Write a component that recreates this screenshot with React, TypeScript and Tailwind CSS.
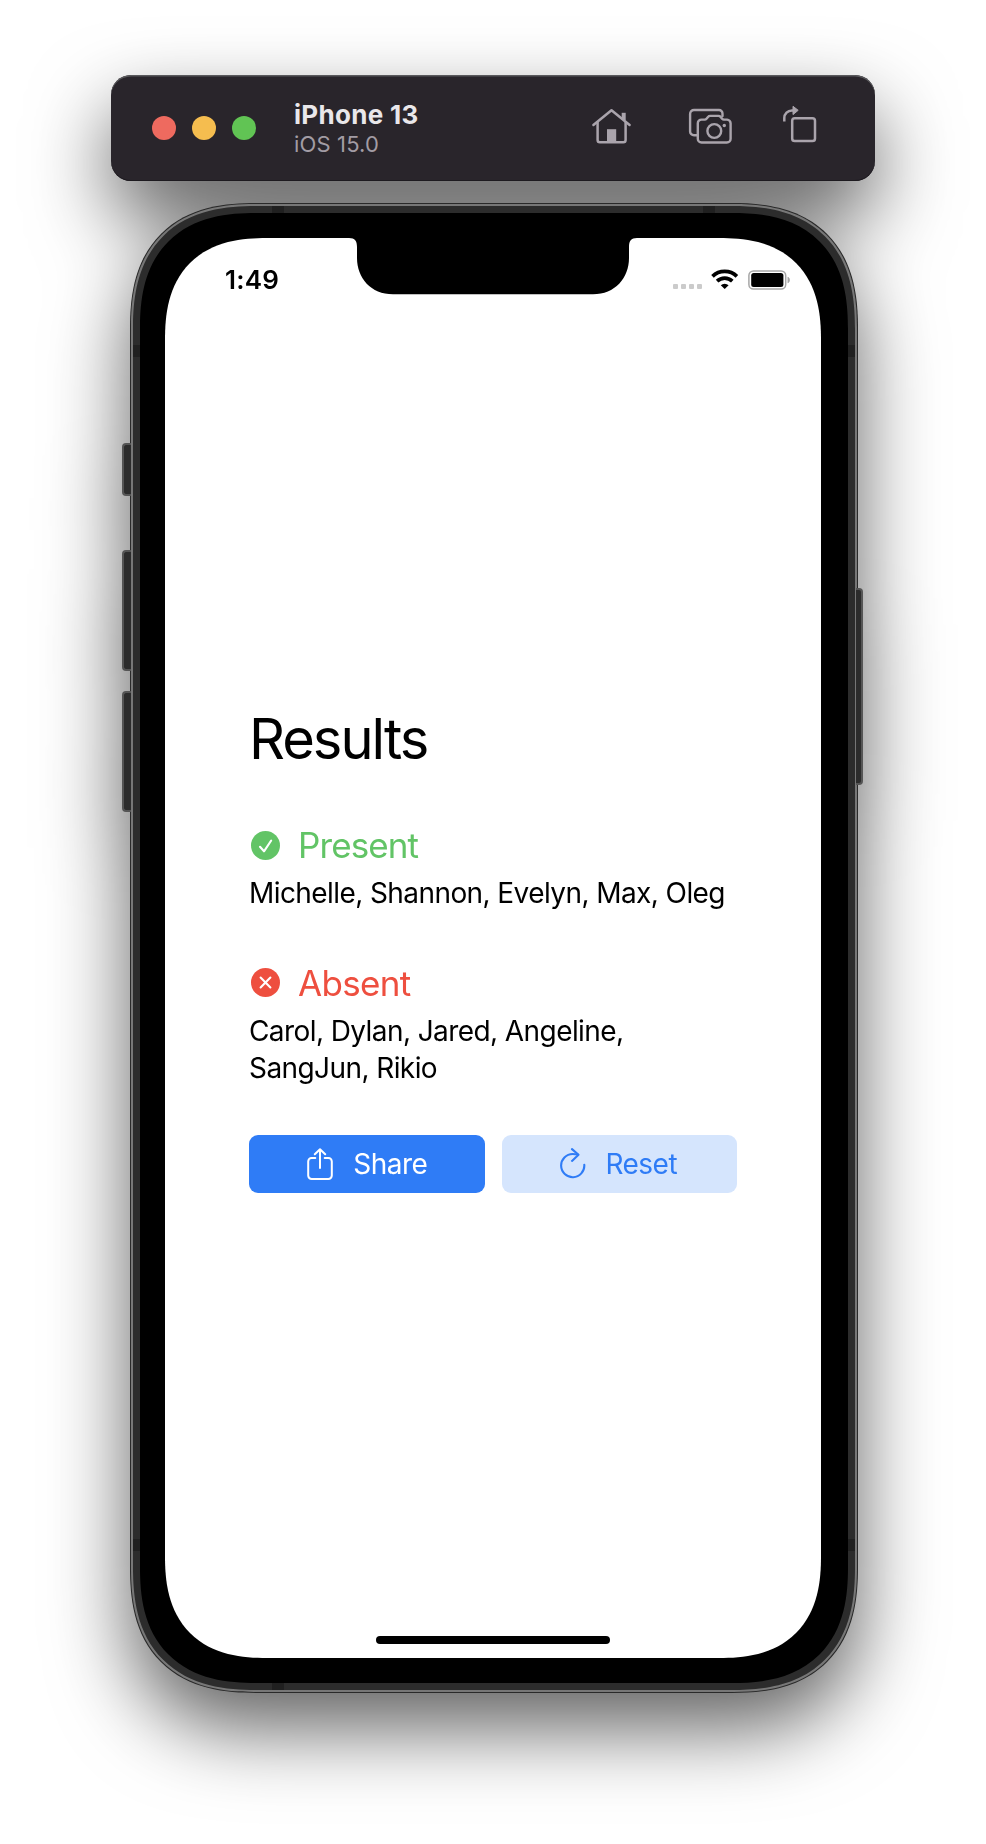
import type { ReactNode } from "react";

const NAMES = "mt-[7px] text-[28px] leading-[37px] tracking-[-0.580px] whitespace-nowrap text-black";

function HomeIcon() {
  return (
    <svg width="42" height="38" viewBox="0 0 42 38" fill="none" stroke="#aaa4ac" strokeWidth="2.5" strokeLinecap="round" strokeLinejoin="round">
      <path d="M2.4 18 20.5 3.2 38.6 18" />
      <path d="M6.6 15.5V33a2.3 2.3 0 0 0 2.3 2.3h23.4a2.3 2.3 0 0 0 2.3-2.3V15.5" />
      <path d="M32.7 13V5.800" strokeWidth="4" strokeLinecap="butt" />
      <path d="M16 35.5V22.2h9.2v13.3z" fill="#aaa4ac" stroke="none" />
    </svg>
  );
}

function CameraIcon() {
  return (
    <svg width="44" height="38" viewBox="0 0 44 38" fill="none" stroke="#aaa4ac" strokeWidth="2.4" strokeLinecap="round" strokeLinejoin="round">
      <path d="M9 27.3H6a3.9 3.9 0 0 1-3.9-3.9V5.9A3.9 3.9 0 0 1 6 2h25a3.5 3.5 0 0 1 3.5 3.6V8" />
      <path d="M13.5 11.6h3.2c.8 0 1.3-.3 1.8-.9l1.5-1.8c.6-.7 1.2-1 2.2-1h8.2c1 0 1.6.3 2.2 1l1.5 1.8c.5.6 1 .9 1.8.9h3.2a3.7 3.7 0 0 1 3.5 3.7v15.5a3.7 3.7 0 0 1-3.7 3.7H13.5a3.7 3.7 0 0 1-3.7-3.7v-15.5a3.7 3.7 0 0 1 3.7-3.7z" />
      <circle cx="26.3" cy="23" r="6.9" />
      <circle cx="36.3" cy="17.5" r="1.7" fill="#aaa4ac" stroke="none" />
    </svg>
  );
}

function RotateIcon() {
  return (
    <svg width="36" height="40" viewBox="0 0 36 40" fill="none" stroke="#aaa4ac" strokeWidth="2.5">
      <rect x="10.2" y="14.2" width="22.8" height="22.8" rx="2.6" />
      <path d="M2.3 17.5V14a7.6 7.6 0 0 1 7.6-7.6h2" />
      <path d="M11 2.3 16.2 6.3 11 10.6z" fill="#aaa4ac" strokeWidth="1" strokeLinejoin="round" />
    </svg>
  );
}

function WifiIcon() {
  return (
    <svg width="28" height="20" viewBox="0 0 28 20" fill="none" stroke="#000" strokeWidth="3.7">
      <path d="M1.5 7.4a17.5 17.5 0 0 1 24.4 0" />
      <path d="M6.1 12.2a11 11 0 0 1 15.2 0" />
      <path d="M13.7 20 9.8 16.3a5.4 5.4 0 0 1 7.8 0z" fill="#000" stroke="none" />
    </svg>
  );
}

function BatteryIcon() {
  return (
    <svg width="43" height="20" viewBox="0 0 43 20" fill="none">
      <rect x="0.9" y="0.9" width="36.8" height="18.2" rx="4.6" stroke="#a6a6a6" strokeWidth="1.5" />
      <rect x="3.2" y="3.1" width="32.2" height="13.8" rx="2.5" fill="#000" />
      <path d="M39.9 7v6a3.5 3.5 0 0 0 0-6z" fill="#a6a6a6" stroke="#a6a6a6" strokeWidth=".6" />
    </svg>
  );
}

function ShareIcon() {
  return (
    <svg width="26" height="32" viewBox="0 0 26 32" fill="none" stroke="#fff" strokeWidth="2" strokeLinecap="round" strokeLinejoin="round">
      <path d="M8.3 10H4.6A3.4 3.4 0 0 0 1.2 13.4v14.2A3.4 3.4 0 0 0 4.6 31h16.8a3.4 3.4 0 0 0 3.4-3.4V13.4A3.4 3.4 0 0 0 21.4 10h-3.7" />
      <path d="M13 20V1.5M7.8 6.3 13 1.2l5.2 5.1" />
    </svg>
  );
}

function ResetIcon() {
  return (
    <svg width="26" height="32" viewBox="0 0 26 32" fill="none" stroke="#2f7cf6" strokeWidth="2.1" strokeLinecap="round" strokeLinejoin="round">
      <path d="M24.3 16.9A11.6 11.6 0 1 1 12.7 6c1.7 0 3.4.2 5 .5" />
      <path d="M12 1.1 18.5 6.7 12 12.9" />
    </svg>
  );
}

function StatusHeading({ color, label, children }: { color: string; label: ReactNode; children: ReactNode }) {
  return (
    <div className={`flex items-center gap-[18.5px] pl-[1.5px] h-[46px] ${color}`}>
      <svg width="29" height="29" viewBox="0 0 29 29">
        <circle cx="14.5" cy="14.5" r="14.5" fill="currentColor" />
        <g fill="none" stroke="#fff" strokeWidth="2.1" strokeLinecap="round" strokeLinejoin="round">{children}</g>
      </svg>
      {label}
    </div>
  );
}

const SIDE_BUTTON = "absolute bg-[#2c2c2c] border-[#555]";
const BAND = "absolute bg-[#202020]";

export default function App() {
  return (
    <div className="w-[986px] h-[1844px] bg-white overflow-hidden font-['Inter',sans-serif]">
      <div className="flex flex-col pt-[75px] [filter:drop-shadow(0_36px_40px_rgba(0,0,0,0.61))]">
        <header className="ml-[111px] w-[764px] h-[106px] rounded-[20px] bg-[#29252b] shadow-[inset_0_1.5px_0_#59595c,inset_0_-1px_0_#1d1a1f] flex items-center pl-[41px]">
          <div className="flex gap-4">
            <span className="size-6 rounded-full bg-[#ee6a5f]" />
            <span className="size-6 rounded-full bg-[#f5bd4f]" />
            <span className="size-6 rounded-full bg-[#61c454]" />
          </div>
          <div className="mt-[2px] ml-[38px] w-[297px]">
            <div className="text-[26px] leading-[30px] font-bold tracking-[0.3px] text-[#e9e7ea]">iPhone 13</div>
            <div className="text-[22px] leading-[28px] tracking-[0.15px] text-[#a29ca4]">iOS 15.0</div>
          </div>
          <div className="flex items-center">
            <span className="mb-[5px]"><HomeIcon /></span>
            <span className="ml-[55px] mb-[2px]"><CameraIcon /></span>
            <span className="ml-[50px] mb-[8px]"><RotateIcon /></span>
          </div>
        </header>

        <div className="relative mt-[22px] ml-[130px] w-[728px] h-[1490px] rounded-[108px] supports-[corner-shape:round]:rounded-[126px] supports-[corner-shape:round]:[corner-shape:superellipse(1.3)] bg-[#777] border border-[#2a2a2a]">
          <div className={`${SIDE_BUTTON} border-l-2 border-y-2 rounded-l-[4px] left-[-9px] top-[239px] w-[9px] h-[53px]`} />
          <div className={`${SIDE_BUTTON} border-l-2 border-y-2 rounded-l-[4px] left-[-9px] top-[346px] w-[9px] h-[121px]`} />
          <div className={`${SIDE_BUTTON} border-l-2 border-y-2 rounded-l-[4px] left-[-9px] top-[487px] w-[9px] h-[121px]`} />
          <div className={`${SIDE_BUTTON} border-r-2 border-y-2 rounded-r-[4px] right-[-6px] top-[384px] w-[7px] h-[197px]`} />
          <div className="m-[2px] w-[722px] h-[1484px] p-[7px] rounded-[105px] supports-[corner-shape:round]:rounded-[123px] supports-[corner-shape:round]:[corner-shape:superellipse(1.3)] bg-[#2c2c2c]">
            <span className={`${BAND} left-[141px] top-[2px] w-3 h-[7px]`} />
            <span className={`${BAND} right-[142px] top-[2px] w-3 h-[7px]`} />
            <span className={`${BAND} left-[141px] bottom-[2px] w-3 h-[7px]`} />
            <span className={`${BAND} left-[2px] top-[141px] w-[7px] h-3`} />
            <span className={`${BAND} right-[2px] top-[141px] w-[7px] h-3`} />
            <span className={`${BAND} left-[2px] bottom-[141px] w-[7px] h-3`} />
            <span className={`${BAND} right-[2px] bottom-[141px] w-[7px] h-3`} />
            <div className="w-[708px] h-[1470px] pt-[25px] pl-[25px] rounded-[98px] supports-[corner-shape:round]:rounded-[116px] supports-[corner-shape:round]:[corner-shape:superellipse(1.3)] bg-black">
              <main className="relative flex flex-col w-[656px] h-[1420px] rounded-[86px] supports-[corner-shape:round]:rounded-[102px] supports-[corner-shape:round]:[corner-shape:superellipse(1.3)] bg-white">
                <svg className="absolute left-[184px] top-[-1px]" width="288" height="58" viewBox="0 0 288 58">
                  <path d="M0 0H288V1C282 1 280 4 280 10V21C280 41 266 57.3 244 57.3H44C22 57.3 8 41 8 21V10C8 4 6 1 0 1Z" fill="#000" />
                </svg>
                <div className="flex h-[60px] mt-[12px] pl-[60px] pr-[30px] items-center justify-between">
                  <span className="text-[26px] leading-[32px] font-semibold tracking-[0.2px] text-black">1:49</span>
                  <div className="flex items-center">
                    <div className="flex gap-[3px] mt-[13px] mr-[9px]">
                      <span className="size-[5px] rounded-[1px] bg-[#cbcbcb]" />
                      <span className="size-[5px] rounded-[1px] bg-[#cbcbcb]" />
                      <span className="size-[5px] rounded-[1px] bg-[#cbcbcb]" />
                      <span className="size-[5px] rounded-[1px] bg-[#cbcbcb]" />
                    </div>
                    <span className="mb-[2px]"><WifiIcon /></span>
                    <span className="ml-[9px]"><BatteryIcon /></span>
                  </div>
                </div>

                <section className="mt-[395px] ml-[84px] w-[488px]">
                  <h1 className="text-[56px] leading-[68px] tracking-[-2px] text-black">Results</h1>
                  <div className="mt-[49px]">
                    <StatusHeading color="text-[#62c466]" label={<h2 className="text-[35px] leading-[46px] tracking-[-0.9px]">Present</h2>}>
                      <path d="M9 15.8 13 20.3 20.2 9.5" />
                    </StatusHeading>
                    <p className={NAMES}>Michelle, Shannon, Evelyn, Max, Oleg</p>
                  </div>
                  <div className="mt-[47.5px]">
                    <StatusHeading color="text-[#ee4f3f]" label={<h2 className="text-[35px] leading-[46px] tracking-[-0.7px]">Absent</h2>}>
                      <path d="M9.6 9.6 19.4 19.4M19.4 9.6 9.6 19.4" />
                    </StatusHeading>
                    <p className={NAMES}>Carol, Dylan, Jared, Angeline,<br />SangJun, Rikio</p>
                  </div>
                  <div className="flex gap-[17px] mt-[48px]">
                    <button className="flex items-center justify-center gap-[20px] pl-[1px] w-[235.5px] h-[58px] rounded-[9px] bg-[#2f7cf6] text-white text-[28px] tracking-[-0.5px]">
                      <ShareIcon />
                      <span>Share</span>
                    </button>
                    <button className="flex items-center justify-center gap-[19px] pr-[1px] w-[235.5px] h-[58px] rounded-[9px] bg-[#d5e5fd] text-[#2f7cf6] text-[28px] tracking-[-0.5px]">
                      <ResetIcon />
                      <span>Reset</span>
                    </button>
                  </div>
                </section>
                <div className="absolute left-[211px] bottom-[14px] w-[234px] h-[8px] rounded-full bg-black" />
              </main>
            </div>
          </div>
        </div>
      </div>
    </div>
  );
}
